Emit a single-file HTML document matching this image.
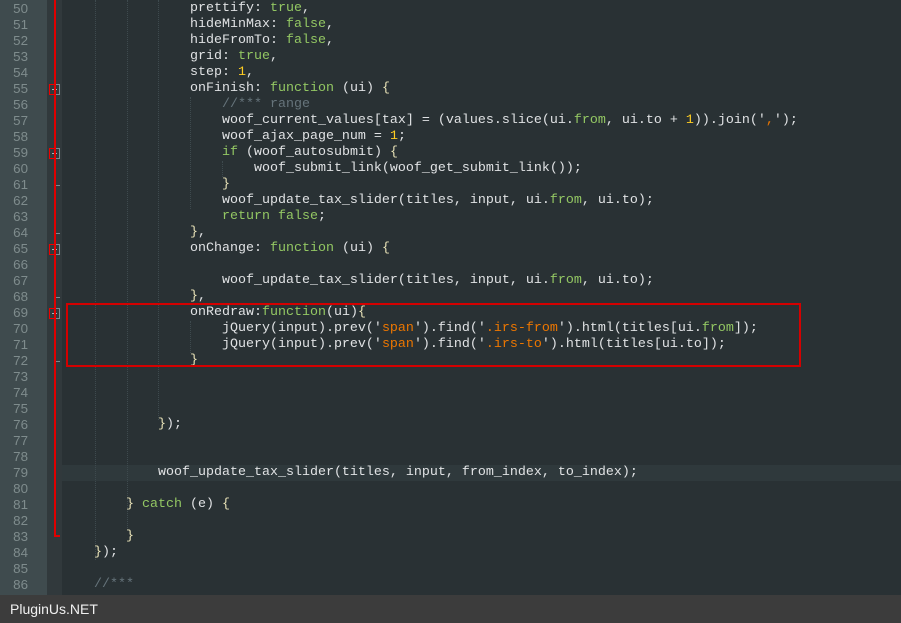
<!DOCTYPE html>
<html><head><meta charset="utf-8"><style>
body{margin:0;width:901px;height:623px;overflow:hidden;background:#293134;position:relative;font-family:"Liberation Mono",monospace}
.gut{position:absolute;left:0;top:0;width:47px;height:595px;background:#3f4b4e}
.fold{position:absolute;left:47px;top:0;width:15px;height:595px;background:#31393c}
.ln{position:absolute;left:0;width:28px;text-align:right;color:#7f8c8d;font-size:13.33px;line-height:16px;font-family:"Liberation Sans",sans-serif}
.l{position:absolute;left:62px;white-space:pre;color:#e0e2e4;font-size:13.33px;line-height:16px}
.k{color:#93c763}.n{color:#ffcd22}.s{color:#ec7600}.c{color:#66747b}.p{color:#e8e2b7}
.fb{position:absolute;left:49px;width:11px;height:11px;box-sizing:border-box;border:1px solid #7a8a90;background:#31393c}
.fb:after{content:"";position:absolute;left:2px;top:4px;width:5px;height:1px;background:#aab4b8}
.g{position:absolute;width:0;border-left:1px dotted #3e4a4e}
.t{position:absolute;left:54px;width:6px;height:1px;background:#7a8a90}
.rb{position:absolute;left:49px;width:5px;height:11px;box-sizing:border-box;border:1px solid #e00;border-right:none}
</style></head><body>
<div class="gut"></div><div class="fold"></div>
<div style="position:absolute;left:62px;top:465px;width:839px;height:16px;background:#2f393c"></div>
<div class="g" style="left:95px;top:0;height:560px"></div>
<div class="g" style="left:127px;top:0;height:530px"></div>
<div class="g" style="left:158px;top:0;height:420px"></div>
<div class="g" style="left:190px;top:97px;height:112px"></div>
<div class="g" style="left:190px;top:321px;height:32px"></div>
<div class="g" style="left:222px;top:161px;height:16px"></div>
<div id="nums"></div>
<div class="fb" style="top:84px"></div>
<div class="fb" style="top:148px"></div>
<div class="fb" style="top:244px"></div>
<div class="fb" style="top:308px"></div>
<div class="t" style="top:185px"></div>
<div class="t" style="top:233px"></div>
<div class="t" style="top:297px"></div>
<div class="t" style="top:361px"></div>
<div class="rb" style="top:84px"></div>
<div class="rb" style="top:148px"></div>
<div class="rb" style="top:244px"></div>
<div class="rb" style="top:308px"></div>
<div style="position:absolute;left:54px;top:0;width:2px;height:537px;background:#e00000"></div>
<div style="position:absolute;left:54px;top:535px;width:6px;height:2px;background:#e00000"></div>

<div class="l" style="top:1px">                prettify: <span class="k">true</span>,</div>
<div class="l" style="top:17px">                hideMinMax: <span class="k">false</span>,</div>
<div class="l" style="top:33px">                hideFromTo: <span class="k">false</span>,</div>
<div class="l" style="top:49px">                grid: <span class="k">true</span>,</div>
<div class="l" style="top:65px">                step: <span class="n">1</span>,</div>
<div class="l" style="top:81px">                onFinish: <span class="k">function</span> (ui) <span class="p">{</span></div>
<div class="l" style="top:97px">                    <span class="c">//*** range</span></div>
<div class="l" style="top:113px">                    woof_current_values[tax] = (values.slice(ui.<span class="k">from</span>, ui.to + <span class="n">1</span>)).join('<span class="s">,</span>');</div>
<div class="l" style="top:129px">                    woof_ajax_page_num = <span class="n">1</span>;</div>
<div class="l" style="top:145px">                    <span class="k">if</span> (woof_autosubmit) <span class="p">{</span></div>
<div class="l" style="top:161px">                        woof_submit_link(woof_get_submit_link());</div>
<div class="l" style="top:177px">                    <span class="p">}</span></div>
<div class="l" style="top:193px">                    woof_update_tax_slider(titles, input, ui.<span class="k">from</span>, ui.to);</div>
<div class="l" style="top:209px">                    <span class="k">return</span> <span class="k">false</span>;</div>
<div class="l" style="top:225px">                <span class="p">}</span>,</div>
<div class="l" style="top:241px">                onChange: <span class="k">function</span> (ui) <span class="p">{</span></div>
<div class="l" style="top:273px">                    woof_update_tax_slider(titles, input, ui.<span class="k">from</span>, ui.to);</div>
<div class="l" style="top:289px">                <span class="p">}</span>,</div>
<div class="l" style="top:305px">                onRedraw:<span class="k">function</span>(ui)<span class="p">{</span></div>
<div class="l" style="top:321px">                    jQuery(input).prev('<span class="s">span</span>').find('<span class="s">.irs-from</span>').html(titles[ui.<span class="k">from</span>]);</div>
<div class="l" style="top:337px">                    jQuery(input).prev('<span class="s">span</span>').find('<span class="s">.irs-to</span>').html(titles[ui.to]);</div>
<div class="l" style="top:353px">                <span class="p">}</span></div>
<div class="l" style="top:417px">            <span class="p">}</span>);</div>
<div class="l" style="top:465px">            woof_update_tax_slider(titles, input, from_index, to_index);</div>
<div class="l" style="top:497px">        <span class="p">}</span> <span class="k">catch</span> (e) <span class="p">{</span></div>
<div class="l" style="top:529px">        <span class="p">}</span></div>
<div class="l" style="top:545px">    <span class="p">}</span>);</div>
<div class="l" style="top:577px">    <span class="c">//***</span></div>

<div style="position:absolute;left:66px;top:303px;width:731px;height:60px;border:2px solid #d40000"></div>
<div style="position:absolute;left:0;top:595px;width:901px;height:28px;background:#3c3c3c;color:#f0f0f0;font-family:'Liberation Sans',sans-serif;font-size:14px;line-height:28px;padding-left:10px;box-sizing:border-box">PluginUs.NET</div>
<script>
var h='';for(var i=50;i<=86;i++){h+='<div class="ln" style="top:'+(1+16*(i-50))+'px">'+i+'</div>';}
document.getElementById('nums').innerHTML=h;
</script>
</body></html>
